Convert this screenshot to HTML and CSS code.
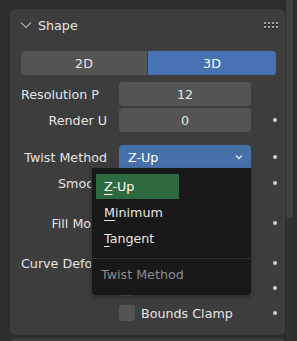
FILE: index.html
```html
<!DOCTYPE html>
<html lang="en">
<head>
    <meta charset="UTF-8">
    <title>Shape</title>
    <link rel="stylesheet" href="styles.css">
</head>
<body>
    <div class="area">
        <section class="panel">
            <div class="panel-header">
                <svg class="chevron" width="12" height="8" viewBox="0 0 12 8">
                    <polyline points="1,1.5 6,6.5 11,1.5" fill="none" stroke="#a8a8a8" stroke-width="1.2"/>
                </svg>
                <span class="panel-title">Shape</span>
                <span class="grip">
                    <i></i><i></i><i></i><i></i>
                    <i></i><i></i><i></i><i></i>
                </span>
            </div>

            <div class="panel-body">
                <div class="toggle">
                    <span class="toggle-item">2D</span>
                    <span class="toggle-item active">3D</span>
                </div>

                <div class="row row-first">
                    <span class="label label-left">Resolution P</span>
                    <span class="field">12</span>
                    <span class="deco"></span>
                </div>
                <div class="row">
                    <span class="label">Render U</span>
                    <span class="field">0</span>
                    <span class="deco"><i class="dot"></i></span>
                </div>

                <div class="row row-group">
                    <span class="label">Twist Method</span>
                    <span class="field dropdown">
                        Z-Up
                        <svg width="8" height="6" viewBox="0 0 8 6">
                            <polyline points="1,1.5 4,4.5 7,1.5" fill="none" stroke="#e8e8e8" stroke-width="1.3"/>
                        </svg>
                    </span>
                    <span class="deco"><i class="dot"></i></span>
                </div>
                <div class="row">
                    <span class="label clip"><span class="clip-text">Smooth</span></span>
                    <span class="field"></span>
                    <span class="deco"><i class="dot"></i></span>
                </div>

                <div class="row row-section">
                    <span class="label clip"><span class="clip-text">Fill Mode</span></span>
                    <span class="field"></span>
                    <span class="deco"><i class="dot"></i></span>
                </div>

                <div class="row row-section">
                    <span class="label clip"><span class="clip-text clip-left">Curve Deform</span></span>
                    <span class="check"><i class="box"></i></span>
                    <span class="deco"><i class="dot"></i></span>
                </div>
                <div class="row row-check">
                    <span class="label"></span>
                    <span class="check"><i class="box"></i></span>
                    <span class="deco"><i class="dot"></i></span>
                </div>
                <div class="row row-check">
                    <span class="label"></span>
                    <span class="check"><i class="box"></i>Bounds Clamp</span>
                    <span class="deco"><i class="dot"></i></span>
                </div>
            </div>

            <div class="menu">
                <div class="menu-item selected"><u>Z</u>-Up</div>
                <div class="menu-item"><u>M</u>inimum</div>
                <div class="menu-item"><u>T</u>angent</div>
                <div class="menu-sep"></div>
                <div class="menu-title">Twist Method</div>
            </div>
        </section>

        <section class="panel panel-next"></section>
    </div>

    <div class="scrollbar">
        <div class="thumb"></div>
    </div>
</body>
</html>
```

FILE: styles.css
```css
body {
    margin: 0;
    width: 297px;
    height: 341px;
    overflow: hidden;
    display: flex;
    background-color: #2d2d2d;
    color: #e4e4e4;
    font-family: "DejaVu Sans", "Liberation Sans", sans-serif;
    font-size: 12.7px;
}

.area {
    width: 286px;
    padding-left: 10px;
    box-sizing: border-box;
    display: flex;
    flex-direction: column;
}

.panel {
    position: relative;
    margin-top: 9px;
    height: 326px;
    flex-shrink: 0;
    background-color: #3d3d3d;
    border-radius: 5px;
    margin-right: 1px;
}

.panel-next {
    margin-top: 3px;
    height: 20px;
    border-radius: 5px 5px 0 0;
}

.panel-header {
    height: 32px;
    display: flex;
    align-items: center;
    padding-left: 10px;
    padding-right: 7px;
}

.chevron {
    display: block;
}

.panel-title {
    margin-left: 6px;
    color: #e6e6e6;
}

.grip {
    margin-left: auto;
    display: grid;
    grid-template-columns: repeat(4, 2px);
    grid-template-rows: repeat(2, 2px);
    gap: 2px;
}

.grip i {
    background-color: #a0a0a0;
    box-shadow: 0 1px 0 #1e1e1e;
}

.panel-body {
    padding: 10px 9px 0 11px;
}

.toggle {
    display: flex;
    height: 24px;
    border-radius: 4px;
    overflow: hidden;
}

.toggle-item {
    display: flex;
    align-items: center;
    justify-content: center;
    background-color: #545454;
    color: #e6e6e6;
    width: 126px;
}

.toggle-item.active {
    flex: 1;
    background-color: #4772b3;
    color: #ffffff;
    border-left: 1px solid #3d3d3d;
}

.row {
    display: grid;
    grid-template-columns: 86px 132px 25px;
    column-gap: 12px;
    height: 24px;
    margin-top: 2px;
    align-items: center;
}

.row-first {
    margin-top: 7px;
}

.row-group {
    margin-top: 13px;
}

.row-section {
    margin-top: 16px;
}

.row-check {
    margin-top: 1px;
}

.label {
    text-align: right;
    white-space: nowrap;
    overflow: hidden;
}

.label-left {
    text-align: left;
}

/* labels partly covered by the open menu */
.label.clip {
    width: 70px;
}

.clip-text {
    display: block;
    width: 86px;
}

.clip-text.clip-left {
    text-align: left;
}

.field {
    height: 24px;
    border-radius: 4px;
    background-color: #545454;
    display: flex;
    align-items: center;
    justify-content: center;
    color: #e6e6e6;
}

.field.dropdown {
    justify-content: space-between;
    padding: 0 8px 0 9px;
    background-color: #4670aa;
    border-radius: 4px 4px 0 0;
    color: #ffffff;
}

.field.dropdown svg {
    display: block;
}

.deco {
    display: flex;
    justify-content: center;
    margin-left: -1px;
}

.dot {
    width: 4px;
    height: 4px;
    border-radius: 50%;
    background-color: #d2d2d2;
}

.check {
    display: flex;
    align-items: center;
    gap: 6px;
    white-space: nowrap;
}

.box {
    width: 16px;
    height: 16px;
    border-radius: 3px;
    background-color: #545454;
}

.menu {
    position: absolute;
    left: 82px;
    top: 159px;
    width: 159px;
    height: 127px;
    box-sizing: border-box;
    padding-top: 6px;
    background-color: #181818;
    border-radius: 0 0 4px 4px;
    box-shadow: 0 2px 4px rgba(0, 0, 0, 0.35);
}

.menu-item {
    height: 26px;
    line-height: 26px;
    width: 75px;
    margin-left: 4px;
    padding-left: 8px;
    color: #e6e6e6;
}

.menu-item.selected {
    height: 25px;
    line-height: 25px;
    margin-bottom: 1px;
    background-color: #2d6a3f;
    color: #ffffff;
}

.menu-item u {
    text-decoration-thickness: 1px;
    text-underline-offset: 3px;
}

.menu-sep {
    margin-top: 6px;
    height: 1px;
    background-color: #2f2f2f;
}

.menu-title {
    height: 32px;
    line-height: 32px;
    padding-left: 9px;
    color: #8c8c8c;
}

.scrollbar {
    width: 7px;
    background-color: #303030;
}

.thumb {
    height: 218px;
    background-color: #404040;
    border-radius: 0 0 3px 3px;
}
```
